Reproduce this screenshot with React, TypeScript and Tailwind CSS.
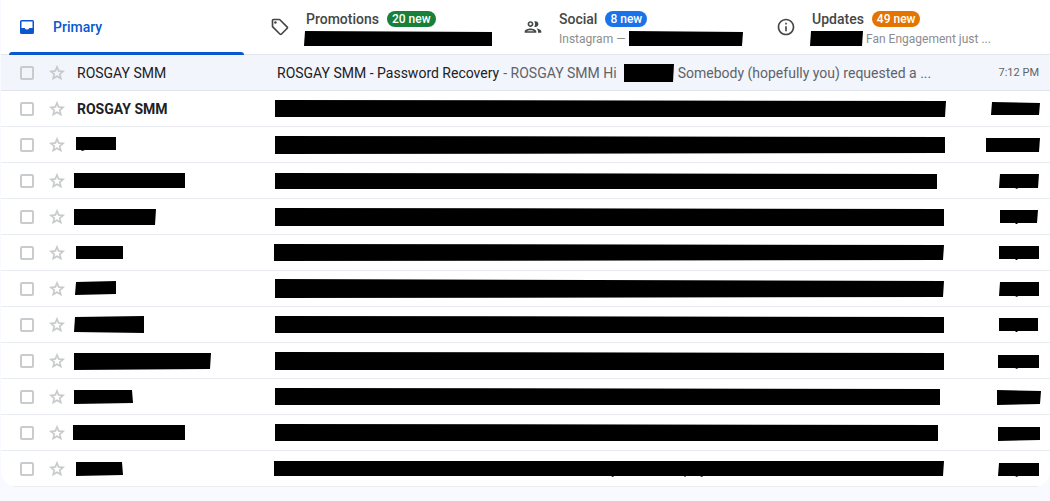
import type { ReactNode } from "react"
import { MdInfoOutline, MdOutlineGroup, MdOutlineSell } from "react-icons/md"

type Tab = {
  label: string
  icon: ReactNode
  badge?: { text: string; className: string }
  preview?: ReactNode
}

type Mail = {
  sender: string
  subject: string
  time: string
}

// Polygon points of the blacked-out shapes, relative to each cell
const redactedMails: Mail[] = [
  { sender: "", subject: "2,9 673,10 672,26 2,26", time: "7,11 55,12 54,24 6,24" },
  { sender: "3,10 43,10 43,23 12,23 9,24 8,23 3,23", subject: "2,9 672,10 672,26 2,27", time: "1,11 55,11 54,25 1,25" },
  { sender: "1,10 112,10 112,25 1,25", subject: "2,10 664,11 664,26 2,26", time: "15,11 54,11 53,25 33,25 32,26 30,25 14,25" },
  { sender: "1,10 83,10 82,26 1,26", subject: "2,9 671,10 671,27 2,27", time: "15,11 53,11 52,24 33,24 32,25 31,25 30,24 15,24" },
  { sender: "3,11 50,11 50,24 3,24", subject: "1,9 671,10 670,25 1,26", time: "14,11 54,11 54,24 33,24 32,25 31,25 30,24 14,24" },
  { sender: "3,11 43,10 43,23 2,24", subject: "2,8 671,10 670,26 2,27", time: "15,11 54,11 54,25 33,25 32,26 30,25 14,25" },
  { sender: "2,10 71,9 71,26 1,25", subject: "2,9 671,10 671,26 2,26", time: "14,11 53,11 53,24 33,24 32,25 31,25 30,24 14,24" },
  { sender: "1,10 138,10 137,26 1,27", subject: "2,9 671,10 671,27 2,27", time: "13,12 54,12 54,25 33,25 32,26 30,25 13,25" },
  { sender: "1,11 59,11 60,24 1,25", subject: "2,9 667,10 667,26 2,26", time: "12,11 56,12 55,25 12,26" },
  { sender: "0,10 112,10 112,25 0,25", subject: "2,9 665,10 665,26 2,26", time: "13,12 55,12 55,25 13,26" },
  {
    sender: "3,11 49,11 50,24 3,25",
    subject: "1,10 671,10 670,25 430,25 429,26 427,25 413,25 412,26 411,25 341,25 340,26 338,25 1,25",
    time: "14,12 54,12 54,25 33,25 32,26 30,25 13,25",
  },
]

const tabs: Tab[] = [
  { label: "Primary", icon: <InboxIcon /> },
  {
    label: "Promotions",
    icon: <MdOutlineSell />,
    badge: { text: "20 new", className: "bg-[#188038]" },
    preview: <Redaction points="-1,0 186,1 186,15 -2,15" className="h-4 w-[186px]" />,
  },
  {
    label: "Social",
    icon: <MdOutlineGroup />,
    badge: { text: "8 new", className: "bg-[#1a73e8]" },
    preview: (
      <>
        <span>Instagram —</span>
        <Redaction points="1,0 115,1 114,15 1,15" className="ml-0.5 h-4 w-[114px]" />
      </>
    ),
  },
  {
    label: "Updates",
    icon: <MdInfoOutline />,
    badge: { text: "49 new", className: "bg-[#e37400]" },
    preview: (
      <>
        <Redaction points="-1,0 51,0 50,15 -2,15" className="mr-1 h-4 w-[50px]" />
        <span>Fan Engagement just ...</span>
      </>
    ),
  },
]

function InboxIcon() {
  return (
    <svg viewBox="0 0 20 20" className="h-5 w-5 fill-current" fillRule="evenodd" aria-hidden="true">
      <path d="M4.5 3h11A1.5 1.5 0 0 1 17 4.5v11a1.5 1.5 0 0 1-1.5 1.5h-11A1.5 1.5 0 0 1 3 15.5v-11A1.5 1.5 0 0 1 4.5 3zm0 1.5v6.5h3.2a2.5 2.5 0 0 0 4.6 0h3.2V4.5z" />
    </svg>
  )
}

function StarIcon() {
  return (
    <svg viewBox="0 0 24 24" className="h-[18px] w-[18px] fill-current stroke-current stroke-[0.6]" aria-hidden="true">
      <path d="M22 9.24l-7.19-.62L12 2 9.19 8.63 2 9.24l5.46 4.73L5.82 21 12 17.27 18.18 21l-1.63-7.03L22 9.24zM12 15.4l-3.76 2.27 1-4.28-3.32-2.88 4.38-.38L12 6.1l1.71 4.04 4.38.38-3.32 2.88 1 4.28L12 15.4z" />
    </svg>
  )
}

function Redaction({ points, className }: { points: string; className: string }) {
  return (
    <svg aria-hidden="true" className={`shrink-0 overflow-visible fill-black ${className}`}>
      <polygon points={points} />
    </svg>
  )
}

function CategoryTab({ tab, active }: { tab: Tab; active: boolean }) {
  return (
    <button
      type="button"
      role="tab"
      aria-selected={active}
      className={`relative flex h-full max-w-[253px] flex-1 items-center gap-4 pl-4 text-left ${
        active ? "text-[#0b57d0]" : "text-[#444746]"
      }`}
    >
      <span className="text-[20px]">{tab.icon}</span>
      <span className={`flex min-w-0 flex-col ${tab.preview ? "pt-1" : ""}`}>
        <span className="flex items-center gap-2">
          <span className="text-sm leading-5 font-medium">{tab.label}</span>
          {tab.badge && (
            <span className={`rounded-full px-[5px] text-xs leading-4 font-medium text-white ${tab.badge.className}`}>
              {tab.badge.text}
            </span>
          )}
        </span>
        {tab.preview && (
          <span className="flex h-5 items-center text-xs whitespace-nowrap text-[#8b8d8e]">{tab.preview}</span>
        )}
      </span>
      {active && <span className="absolute -bottom-px left-2 h-[3px] w-[235px] rounded-t-[3px] bg-[#0b57d0]" />}
    </button>
  )
}

function MailRow({ name, read, children }: { name: string; read?: boolean; children: ReactNode }) {
  const cell = read ? "border-[#dfe4ec]" : "border-[#e9ecf0]"
  return (
    <tr className={`${read ? "bg-[#f2f5fc]" : "bg-white"} [&>td]:h-9 [&>td]:border-b [&>td]:p-0`}>
      <td className={cell}>
        <div className="flex items-center gap-3.5 pl-[19px]">
          <input
            type="checkbox"
            aria-label={`Select ${name}`}
            className="h-3.5 w-3.5 appearance-none rounded-[2px] border-2 border-[#c9cbcd]"
          />
          <button type="button" aria-label={`Star ${name}`} className="pt-px text-[#c4c6c8]">
            <StarIcon />
          </button>
        </div>
      </td>
      {children}
    </tr>
  )
}

export default function App() {
  return (
    <div className="min-h-screen bg-[#f8faff] pl-px font-[Roboto,'Liberation_Sans',sans-serif] text-[#202124]">
      <main className="overflow-hidden rounded-b-2xl bg-white">
        <div role="tablist" className="flex h-[55px] border-b border-[#e4e8ee]">
          {tabs.map((tab, i) => (
            <CategoryTab key={tab.label} tab={tab} active={i === 0} />
          ))}
        </div>

        <table className="w-full table-fixed border-separate border-spacing-0 text-sm">
          <colgroup>
            <col className="w-[72px]" />
            <col className="w-[200px]" />
            <col />
            <col className="w-[65px]" />
          </colgroup>
          <tbody>
            <MailRow name="Password Recovery" read>
              <td className="border-[#dfe4ec]">
                <span className="pl-1">ROSGAY SMM</span>
              </td>
              <td className="border-[#dfe4ec]">
                <div className="flex items-center gap-1 pl-1 whitespace-nowrap text-[#5f6368]">
                  <span className="text-[#202124]">ROSGAY SMM - Password Recovery</span>
                  <span>- ROSGAY SMM Hi</span>
                  <Redaction points="3,0 53,0 52,18 3,18" className="h-[18px] w-[53px]" />
                  <span>Somebody (hopefully you) requested a ...</span>
                </div>
              </td>
              <td className="border-[#dfe4ec]">
                <div className="pr-[11px] text-right text-[11px] whitespace-nowrap text-[#5f6368]">7:12 PM</div>
              </td>
            </MailRow>
            {redactedMails.map((mail, i) => (
              <MailRow key={i} name={`message ${i + 2}`}>
                <td className="border-[#e9ecf0]">
                  {mail.sender ? (
                    <Redaction points={mail.sender} className="block h-[35px] w-full" />
                  ) : (
                    <span className="pl-1 font-bold">ROSGAY SMM</span>
                  )}
                </td>
                <td className="border-[#e9ecf0]">
                  <Redaction points={mail.subject} className="block h-[35px] w-full" />
                </td>
                <td className="border-[#e9ecf0]">
                  <Redaction points={mail.time} className="block h-[35px] w-full" />
                </td>
              </MailRow>
            ))}
          </tbody>
        </table>
      </main>
    </div>
  )
}
